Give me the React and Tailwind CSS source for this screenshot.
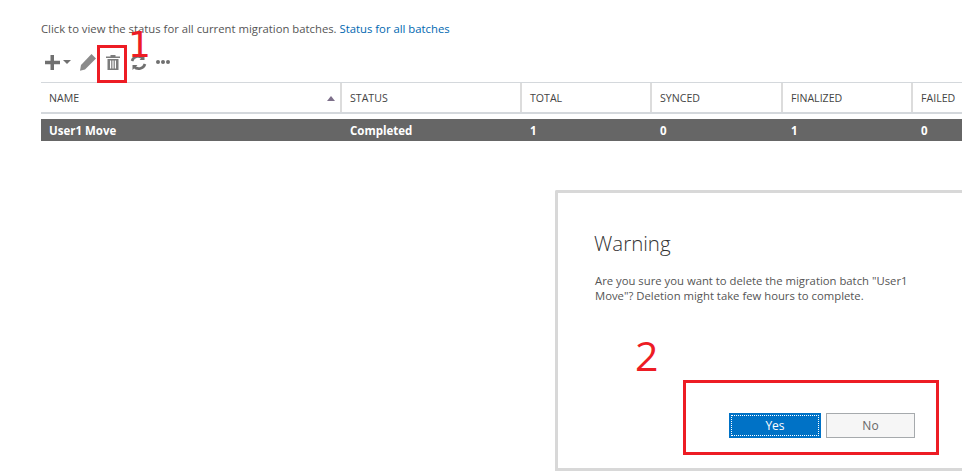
import React from 'react';

const font = "font-['Open_Sans','Noto_Sans',sans-serif]";

const columns = [
  { label: 'NAME', value: 'User1 Move', width: 'w-[301px]', sort: true },
  { label: 'STATUS', value: 'Completed', width: 'w-[180px]' },
  { label: 'TOTAL', value: '1', width: 'w-[130px]' },
  { label: 'SYNCED', value: '0', width: 'w-[131px]' },
  { label: 'FINALIZED', value: '1', width: 'w-[130px]' },
  { label: 'FAILED', value: '0', width: 'flex-1' },
];

const Toolbar = () => (
  <div className="flex items-center h-[38px] mt-[6px] ml-[3px] text-[#707070]">
    <svg width="17" height="17" viewBox="0 0 17 17" fill="currentColor"><path d="M6.500 1h3.500v5.800h6v3.400h-6V16H6.500v-5.800H1V6.800h5.500z" /></svg>
    <svg width="8" height="4" viewBox="0 0 8 4" fill="currentColor" className="ml-[2px]"><path d="M0 0h8L4 4z" /></svg>
    <svg width="18" height="18" viewBox="0 0 18 18" fill="#8a8a8a" className="ml-[8px]"><path d="M12.500 1l4.500 4.500L6 16.500l-5 1.200L2 12z" /></svg>
    <svg width="14" height="15" viewBox="0 0 14 15" fill="#7c7c7c" className="ml-[9px]">
      <path d="M4.500 0h5v1.500h4.500V3H0V1.500h4.500z" />
      <path d="M1.500 4h11v11h-11zM4 5.500v8h1.200v-8zM6.400 5.500v8h1.200v-8zM8.800 5.500v8H10v-8z" fillRule="evenodd" />
    </svg>
    <svg width="17" height="17" viewBox="0 0 17 17" fill="none" stroke="currentColor" strokeWidth="2.600" className="ml-[10px]">
      <path d="M2 7a6.500 6.500 0 0 1 11-2.500" />
      <path d="M15 10a6.500 6.500 0 0 1-11 2.500" />
      <path d="M14.500 1v5h-5zM2.500 16v-5h5z" fill="currentColor" stroke="none" />
    </svg>
    <div className="flex gap-[1px] ml-[9px]">
      <span className="w-[4px] h-[4px] rounded-full bg-[#707070]" />
      <span className="w-[4px] h-[4px] rounded-full bg-[#707070]" />
      <span className="w-[4px] h-[4px] rounded-full bg-[#707070]" />
    </div>
  </div>
);

const Table = () => (
  <div className="ml-[41px] mt-[1px]">
    <div className="flex h-[32px] border-t border-b-2 border-[#d4d8dc]">
      {columns.map((c) => (
        <div key={c.label} className={`${c.width} relative flex items-center pl-2 pt-[2px] border-r-2 border-[#dcdcdc] last:border-r-0 text-[10.600px] text-[#444444]`}>
          {c.label}
          {c.sort && <span className="absolute right-[5px] top-[13px] w-0 h-0 border-x-[4px] border-x-transparent border-b-[5px] border-b-[#7d6f8a]" />}
        </div>
      ))}
    </div>
    <div className="flex h-[22px] mt-[5px] bg-[#666666]">
      {columns.map((c) => (
        <div key={c.label} className={`${c.width} flex items-center pl-2 pt-[1px] text-[11.500px] font-bold text-white`}>
          {c.value}
        </div>
      ))}
    </div>
  </div>
);

const Dialog = () => (
  <div className="ml-[555px] mt-[49px] h-[281px] border-[3px] border-r-0 border-[#d8d8d8] rounded-tl-[2px] pl-[36px] pt-[37px]">
    <h1 className="text-[20.500px] font-light leading-[27px] text-[#333333]">Warning</h1>
    <p className="mt-[16px] ml-[1px] w-[345px] text-[11.300px] leading-[15px] text-[#555555]">
      Are you sure you want to delete the migration batch "User1 Move"? Deletion might take few hours to complete.
    </p>
    <div className="flex gap-[5px] ml-[135px] mt-[110px]">
      <button className="w-[92px] h-[25px] bg-[#0072c6] text-white text-[12px] p-[2px]">
        <span className="flex items-center justify-center h-full border border-dotted border-white">Yes</span>
      </button>
      <button className="w-[89px] h-[25px] bg-[#f6f6f6] border border-[#a6aaad] text-[#666666] text-[12px]">No</button>
    </div>
  </div>
);

export default function App() {
  return (
    <div className={`${font} relative w-[962px] h-[473px] overflow-hidden bg-white`}>
      <div className="ml-[41px] pt-[21px] text-[11.300px] leading-[16px] text-[#555555]">
        Click to view the status for all current migration batches.{' '}
        <span className="text-[#0067b0]">Status for all batches</span>
        <Toolbar />
      </div>
      <Table />
      <Dialog />

      {/* red annotations drawn over the screenshot */}
      <div className="absolute left-[97px] top-[45px] w-[30px] h-[38px] border-[3px] border-[#ed1c24]" />
      <div className="absolute left-[128px] top-[25px] font-['DejaVu_Sans'] text-[36px] leading-[40px] text-[#ed1c24]">1</div>
      <div className="absolute left-[683px] top-[380px] w-[256px] h-[75px] border-[3px] border-[#ed1c24]" />
      <div className="absolute left-[635px] top-[330px] text-[41px] leading-[50px] text-[#ed1c24]">2</div>
    </div>
  );
}
